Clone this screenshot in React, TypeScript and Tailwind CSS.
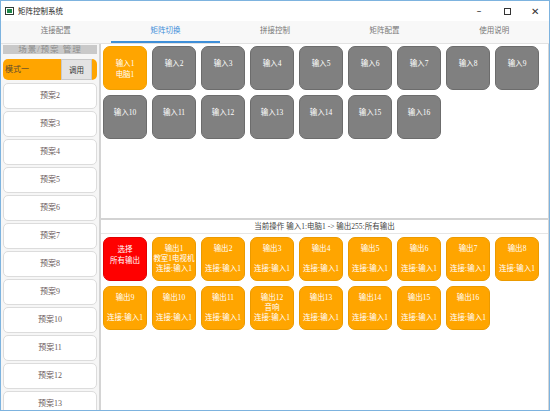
import React from 'react'

const font = { fontFamily: '"Liberation Serif", "Noto Sans CJK SC", serif' }
const cjk = { fontFamily: '"Noto Sans CJK SC", "Liberation Sans", sans-serif' }

const tabs = ['连接配置', '矩阵切换', '拼接控制', '矩阵配置', '使用说明']

const inputs = Array.from({ length: 16 }, (_, i) => ({
  id: i + 1,
  name: i === 0 ? '电脑1' : '',
}))

const outputs = Array.from({ length: 16 }, (_, i) => ({
  id: i + 1,
  name: i === 0 ? '教室1电视机' : i === 11 ? '音响' : '',
}))

const presets = Array.from({ length: 12 }, (_, i) => `预案${i + 2}`)

function TitleBar() {
  return (
    <div className="flex h-[20px] items-center bg-white pl-[4px]">
      <div className="flex h-[8px] w-[9px] items-center justify-center border border-[#2f3b35] bg-white">
        <div className="h-[4px] w-[5px] bg-[#1f8a4c]" />
      </div>
      <span className="ml-[4px] text-[7.5px] text-[#222]" style={cjk}>矩阵控制系统</span>
      <div className="ml-auto flex items-center text-[#333]">
        <span className="w-[28px] text-center text-[9px]">–</span>
        <span className="flex w-[28px] justify-center">
          <span className="h-[7px] w-[7px] border border-[#333]" />
        </span>
        <span className="w-[28px] text-center text-[10px]">✕</span>
      </div>
    </div>
  )
}

function TabBar() {
  return (
    <div className="flex h-[23px] border-b border-[#e2e2e2] bg-[#f8f8f8]">
      {tabs.map((t, i) => (
        <div
          key={t}
          className={
            'flex flex-1 items-center justify-center border-b-2 pb-[2px] text-[7.5px] ' +
            (i === 1 ? 'border-[#3f8fd8] text-[#3f8fd8]' : 'border-transparent text-[#777]')
          }
          style={cjk}
        >
          {t}
        </div>
      ))}
    </div>
  )
}

function LeftPanel() {
  return (
    <div className="flex w-[98px] shrink-0 flex-col bg-[#f6f6f6] px-[2px] pt-[1px]">
      <div className="flex h-[9px] items-center justify-center bg-[#c9c9c9] text-[8.5px] tracking-[1px] text-[#8c8c8c]" style={font}>
        场景/预案 管理
      </div>
      <div className="mt-[5px] flex h-[25px] items-center rounded-[5px] bg-[#ffa500] pl-[2px] pr-[5px]">
        <span className="text-[8px] text-[#5a4a30]" style={font}>模式一</span>
        <div className="ml-auto flex h-[21px] w-[31px] items-center justify-center border border-[#c8c8c8] bg-[#e3e3e3] text-[7.5px] text-[#333]" style={cjk}>
          调用
        </div>
      </div>
      <div className="mt-[3px] flex flex-col gap-[2px]">
        {presets.map((p) => (
          <div
            key={p}
            className="flex h-[26px] shrink-0 items-center justify-center rounded-[5px] border border-[#dcdcdc] bg-white text-[8px] text-[#6a5a5a]"
            style={font}
          >
            {p}
          </div>
        ))}
      </div>
    </div>
  )
}

function InputGrid() {
  return (
    <div className="grid grid-cols-[repeat(9,44px)] gap-[5px] pl-[2px] pt-[2px]">
      {inputs.map((it) => (
        <div
          key={it.id}
          className={
            'flex h-[44px] flex-col items-center rounded-[7px] border pt-[11px] text-[7.5px] leading-[11px] text-white ' +
            (it.id === 1 ? 'border-[#f0a000] bg-[#ffa500]' : 'border-[#6c6c6c] bg-[#808080]')
          }
          style={font}
        >
          <span>输入{it.id}</span>
          {it.name && <span>{it.name}</span>}
        </div>
      ))}
    </div>
  )
}

function OutputGrid() {
  return (
    <div className="grid grid-cols-[repeat(9,44px)] gap-[5px] pl-[2px] pt-[3px]">
      <div className="flex h-[44px] flex-col items-center rounded-[7px] border border-[#e00000] bg-[#ff0000] pt-[6px] text-[7.5px] leading-[11px] text-white" style={font}>
        <span>选择</span>
        <span>所有输出</span>
      </div>
      {outputs.map((o) => (
        <div
          key={o.id}
          className="flex h-[44px] flex-col items-center rounded-[7px] border border-[#eb9a00] bg-[#ffa500] pt-[6px] text-[7.5px] leading-[10px] text-white"
          style={font}
        >
          <span>输出{o.id}</span>
          <span className="h-[10px]">{o.name}</span>
          <span>连接:输入1</span>
        </div>
      ))}
    </div>
  )
}

function RightPanel() {
  return (
    <div className="flex min-w-0 flex-1 flex-col border-r border-[#d6d6d6] bg-white">
      <div className="h-[174px] shrink-0">
        <InputGrid />
      </div>
      <div className="h-[2px] bg-[#d3d3d3]" />
      <div className="flex h-[14px] items-center justify-center border-b border-[#e6e6e6] text-[7.5px] text-[#444]" style={font}>
        当前操作 输入1:电脑1 -&gt; 输出255:所有输出
      </div>
      <OutputGrid />
    </div>
  )
}

export default function App() {
  return (
    <div className="flex h-[411px] w-[550px] flex-col overflow-hidden border border-[#7db3df] bg-white">
      <TitleBar />
      <TabBar />
      <div className="flex min-h-0 flex-1">
        <LeftPanel />
        <div className="w-[2px] shrink-0 bg-[#d4d4d4]" />
        <RightPanel />
      </div>
    </div>
  )
}
